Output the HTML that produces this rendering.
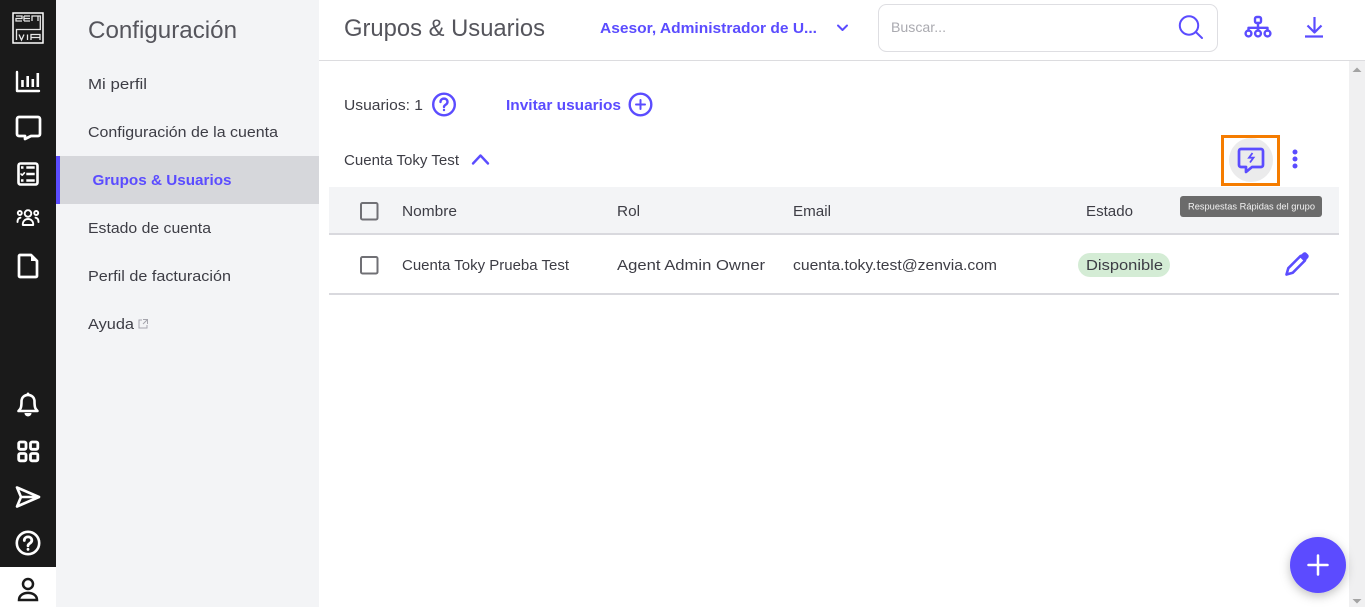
<!DOCTYPE html>
<html lang="es"><head><meta charset="utf-8"><title>Grupos &amp; Usuarios</title>
<style>
html,body{margin:0;padding:0;width:1365px;height:607px;overflow:hidden;background:#fff}
svg{display:block}
text{font-family:"Liberation Sans",sans-serif;font-size:15px;fill:#3d3d45}
.b{font-weight:700;fill:#5b4cff}
.t{font-size:24px;fill:#55555c}
.i{fill:none;stroke:#fff;stroke-width:2.4;stroke-linecap:round;stroke-linejoin:round}
.p{fill:none;stroke:#5b4cff;stroke-width:2.4;stroke-linecap:round;stroke-linejoin:round}
</style></head><body>
<svg width="1365" height="607" viewBox="0 0 1365 607" xmlns="http://www.w3.org/2000/svg">
<rect width="1365" height="607" fill="#fff"/>
<!-- rail -->
<rect width="56" height="607" fill="#1a1a1a"/>
<rect y="567" width="56" height="40" fill="#fff"/>
<rect x="13" y="13" width="30" height="30" fill="none" stroke="#fff" stroke-width="1.500"/>
<path d="M16 16h6v2.500h-6V21h6M24 16h6M24 18.500h6M24 21h6M24 16v5M32 21v-5h8.300v13.500H16.500V40M38 16v5M19 34.500l2.500 5.500 2.500-5.500M27.500 34.500V40M31 40v-5.500h9V40M31 37.500h9" fill="none" stroke="#e6e6e6" stroke-width="1.300"/>
<path class="i" d="M17 72v19h22"/><path class="i" style="stroke-width:2.600;stroke-linecap:butt" d="M22.500 87v-7M27.700 87V76M32.800 87v-8M37.800 87V73"/>
<path class="i" style="stroke-width:2.700" d="M19 117h19a2 2 0 0 1 2 2v15a2 2 0 0 1-2 2h-7l-6 3v-3h-6a2 2 0 0 1-2-2v-15a2 2 0 0 1 2-2z"/>
<rect class="i" style="stroke-width:2.600" x="18.500" y="163.500" width="19" height="21" rx="2"/>
<path class="i" style="stroke-width:2.400;stroke-linecap:butt" d="M26.300 167.500h8.400M26.300 174h8.400M26.300 180.500h8.400M21 167.500h2.500M21 180.500h2.500"/>
<path class="i" style="stroke-width:1.600" d="M21 174l1.200 1.200 2.200-2.400"/>
<g class="i" style="stroke-width:1.900"><circle cx="28" cy="213.500" r="3.300"/><circle cx="19.800" cy="213" r="2"/><circle cx="36.200" cy="213" r="2"/><path d="M22.800 225c-.5-8 11-8 10.400 0zM17.500 222c0-2.500 1-4 3-4.300M38.500 222c0-2.500-1-4-3-4.300"/></g>
<path class="i" style="stroke-width:2.700" d="M20 255h11l6 6v15a1 1 0 0 1-1 1H20a1 1 0 0 1-1-1v-20a1 1 0 0 1 1-1z"/>
<path d="M31 255l6 6h-6z" fill="#fff"/>
<path class="i" style="stroke-width:2.600" d="M18.500 411c2-2 3-3 3-9.500 0-8.800 13-8.800 13 0 0 6.500 1 7.500 3 9.500zM28 393.800v.8"/>
<path d="M24.500 413h7c0 4.500-7 4.500-7 0z" fill="#fff"/>
<g class="i" style="stroke-width:2.800"><rect x="18.700" y="442" width="7.300" height="7.300" rx="1.500"/><rect x="30.500" y="442" width="7.300" height="7.300" rx="1.500"/><rect x="18.700" y="453.500" width="7.300" height="7.300" rx="1.500"/><rect x="30.500" y="453.500" width="7.300" height="7.300" rx="1.500"/></g>
<path class="i" style="stroke-width:2.600" d="M17 487.500l22 9.500-22 9.500 4-9.500zM21 497h18"/>
<circle class="i" style="stroke-width:2.600" cx="28" cy="543" r="11.200"/>
<path class="i" style="stroke-width:2.800" d="M24.300 540.500c0-4.800 7.500-4.800 7.500 0 0 3-3.800 2.500-3.800 5.300M28 549.300v.1"/>
<g fill="none" stroke="#1a1a1a" stroke-width="2.500"><circle cx="28" cy="584" r="5"/><path d="M19 600c0-9.500 18-9.500 18 0z"/></g>
<!-- side nav -->
<rect x="56" width="263" height="607" fill="#f3f4f6"/>
<rect x="56" y="156" width="263" height="48" fill="#d6d7db"/>
<rect x="56" y="156" width="4" height="48" fill="#5b4cff"/>
<text x="88" y="38" class="t" textLength="149" lengthAdjust="spacingAndGlyphs">Configuración</text>
<text x="88" y="89" textLength="59" lengthAdjust="spacingAndGlyphs">Mi perfil</text>
<text x="88" y="137" textLength="190" lengthAdjust="spacingAndGlyphs">Configuración de la cuenta</text>
<text x="92.500" y="185" class="b" textLength="139" lengthAdjust="spacingAndGlyphs">Grupos &amp; Usuarios</text>
<text x="88" y="233" textLength="123" lengthAdjust="spacingAndGlyphs">Estado de cuenta</text>
<text x="88" y="281" textLength="143" lengthAdjust="spacingAndGlyphs">Perfil de facturación</text>
<text x="88" y="329" textLength="46" lengthAdjust="spacingAndGlyphs">Ayuda</text>
<path d="M142 320h-3v8h8v-3M143 319.500h4.500v4.500M147.500 319.500l-4.500 4.500" fill="none" stroke="#a5a5ad" stroke-width="1"/>
<!-- header -->
<rect x="319" y="60" width="1046" height="1" fill="#dcdcdf"/>
<text x="344" y="36" class="t" textLength="201" lengthAdjust="spacingAndGlyphs">Grupos &amp; Usuarios</text>
<text x="600" y="33" class="b" textLength="217" lengthAdjust="spacingAndGlyphs">Asesor, Administrador de U...</text>
<path class="p" style="stroke-width:2" d="M838 25.500l4.500 4.500 4.500-4.500"/>
<rect x="878.500" y="4.500" width="339" height="47" rx="8" fill="#fff" stroke="#dedee2"/>
<text x="891" y="32" style="fill:#aaaab0;font-size:14px" textLength="55" lengthAdjust="spacingAndGlyphs">Buscar...</text>
<circle class="p" style="stroke-width:2" cx="1189" cy="25.500" r="9.200"/><path class="p" style="stroke-width:2" d="M1195.800 32l6.200 6"/>
<g class="p" style="stroke-width:2.400"><rect x="1255" y="17" width="6" height="6" rx="1.800"/><circle cx="1248.500" cy="33.500" r="2.900"/><circle cx="1258" cy="33.500" r="2.900"/><circle cx="1267.500" cy="33.500" r="2.900"/><path d="M1258 23v7.500M1248.500 30.500v-2.700h19v2.700"/></g>
<path class="p" style="stroke-width:2.200;stroke-linecap:butt" d="M1314.500 17v15.500M1307.500 25.500l7 7 7-7M1305 36.500h18"/>
<!-- scrollbar -->
<rect x="1349" y="61" width="16" height="546" fill="#f0f0f1"/>
<path d="M1357 67.500l4.500 4.500h-9z" fill="#a3a3a3"/><path d="M1357 603.500l-4.500-4.500h9z" fill="#a3a3a3"/>
<!-- content -->
<text x="344" y="110" textLength="79" lengthAdjust="spacingAndGlyphs">Usuarios: 1</text>
<circle class="p" cx="444" cy="104.500" r="10.800"/>
<path class="p" d="M440.500 102c0-4.500 7-4.500 7 0 0 3-3.500 2.500-3.500 5M444 110v.1"/>
<text x="506" y="110" class="b" textLength="115" lengthAdjust="spacingAndGlyphs">Invitar usuarios</text>
<circle class="p" cx="640.500" cy="104.500" r="10.800"/><path class="p" style="stroke-width:2" d="M640.500 100v9M636 104.500h9"/>
<text x="344" y="165" textLength="115" lengthAdjust="spacingAndGlyphs">Cuenta Toky Test</text>
<path class="p" d="M473 163.500l7.500-8 7.500 8"/>
<circle cx="1251" cy="160" r="22" fill="#ebebec"/>
<rect x="1222.500" y="136.500" width="56" height="48" fill="none" stroke="#f57c00" stroke-width="3"/>
<path class="p" style="stroke-width:2.700" d="M1241 149h20a2 2 0 0 1 2 2v14a2 2 0 0 1-2 2h-9l-6 5v-5h-5a2 2 0 0 1-2-2v-14a2 2 0 0 1 2-2z"/>
<path class="p" style="stroke-width:1.800;stroke-linecap:butt;stroke-linejoin:miter" d="M1252.500 153l-3.500 4.700h4.500l-3.500 4.800"/>
<circle cx="1295" cy="152" r="2.500" fill="#5b4cff"/><circle cx="1295" cy="159" r="2.500" fill="#5b4cff"/><circle cx="1295" cy="166" r="2.500" fill="#5b4cff"/>
<!-- table -->
<rect x="329" y="187" width="1010" height="46" fill="#f3f4f6"/>
<rect x="329" y="233" width="1010" height="2" fill="#d9d9de"/>
<rect x="329" y="293" width="1010" height="2" fill="#d9d9de"/>
<rect x="361" y="203" width="16.500" height="16.500" rx="1.500" fill="none" stroke="#707075" stroke-width="2"/>
<rect x="361" y="257" width="16.500" height="16.500" rx="1.500" fill="none" stroke="#707075" stroke-width="2"/>
<text x="402" y="216" textLength="55" lengthAdjust="spacingAndGlyphs">Nombre</text>
<text x="617" y="216" textLength="23" lengthAdjust="spacingAndGlyphs">Rol</text>
<text x="793" y="216" textLength="38" lengthAdjust="spacingAndGlyphs">Email</text>
<text x="1086" y="216" textLength="47" lengthAdjust="spacingAndGlyphs">Estado</text>
<text x="402" y="270" textLength="167" lengthAdjust="spacingAndGlyphs">Cuenta Toky Prueba Test</text>
<text x="617" y="270" textLength="148" lengthAdjust="spacingAndGlyphs">Agent Admin Owner</text>
<text x="793" y="270" textLength="204" lengthAdjust="spacingAndGlyphs">cuenta.toky.test@zenvia.com</text>
<rect x="1078" y="253" width="92" height="24" rx="12" fill="#d4ecd5"/>
<text x="1086" y="270" textLength="77" lengthAdjust="spacingAndGlyphs">Disponible</text>
<path class="p" style="stroke-width:2.600" d="M1286.500 274.500l1.800-6.300 12.200-12.200 4.500 4.500-12.200 12.200z"/>
<path d="M1299.500 256l3.500-3a2.500 2.500 0 0 1 3.500 0l1.500 1.500a2.500 2.500 0 0 1 0 3.500l-3 3.500z" fill="#5b4cff"/>
<!-- tooltip -->
<rect x="1180" y="196" width="142" height="21" rx="3" fill="#6b6b6b"/>
<text x="1188" y="209.500" style="font-size:9.500px;fill:#f2f2f2" textLength="127" lengthAdjust="spacingAndGlyphs">Respuestas Rápidas del grupo</text>
<!-- fab -->
<defs><filter id="s" x="-40%" y="-40%" width="180%" height="180%"><feDropShadow dx="0" dy="3" stdDeviation="5" flood-color="#000" flood-opacity=".25"/></filter></defs>
<circle cx="1318" cy="565" r="28" fill="#5b4cff" filter="url(#s)"/>
<path d="M1318 555.500v19M1308.500 565h19" stroke="#fff" stroke-width="2.500" stroke-linecap="round" fill="none"/>
</svg>
</body></html>
